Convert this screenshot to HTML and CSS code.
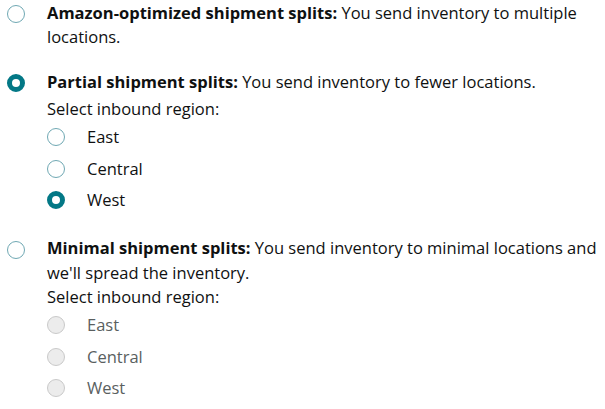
FILE: index.html
```html
<!DOCTYPE html>
<html lang="en">
<head>
<meta charset="utf-8">
<title>Shipment splits</title>
<link rel="stylesheet" href="styles.css">
</head>
<body>
<div class="options">
  <div class="option">
    <span class="radio"></span>
    <div class="content">
      <p class="desc"><b>Amazon-optimized shipment splits:</b> You send inventory to multiple locations.</p>
    </div>
  </div>
  <div class="option">
    <span class="radio checked"></span>
    <div class="content">
      <p class="desc"><b>Partial shipment splits:</b> You send inventory to fewer locations.</p>
      <p class="label label-spaced">Select inbound region:</p>
      <div class="sublist">
        <div class="sub"><span class="radio"></span><span class="sub-text">East</span></div>
        <div class="sub"><span class="radio"></span><span class="sub-text">Central</span></div>
        <div class="sub"><span class="radio checked"></span><span class="sub-text">West</span></div>
      </div>
    </div>
  </div>
  <div class="option">
    <span class="radio"></span>
    <div class="content">
      <p class="desc"><b>Minimal shipment splits:</b> You send inventory to minimal locations and we'll spread the inventory.</p>
      <p class="label">Select inbound region:</p>
      <div class="sublist">
        <div class="sub disabled"><span class="radio"></span><span class="sub-text">East</span></div>
        <div class="sub disabled"><span class="radio"></span><span class="sub-text">Central</span></div>
        <div class="sub disabled"><span class="radio"></span><span class="sub-text">West</span></div>
      </div>
    </div>
  </div>
</div>
</body>
</html>
```
FILE: styles.css
```css
html, body {
  margin: 0;
  padding: 0;
  background: #ffffff;
}
body {
  font-family: "Open Sans", "Noto Sans", "Liberation Sans", sans-serif;
  font-size: 16.5px;
  line-height: 24.5px;
  color: #0f1111;
}
.options {
  display: flex;
  flex-direction: column;
  gap: 20px;
  padding: 0.5px 0 0 7px;
  width: 598px;
}
.option {
  display: flex;
  align-items: flex-start;
  gap: 22px;
}
.option > .radio {
  margin-top: 4.5px;
}
.content {
  flex: 1;
}
p {
  margin: 0;
}
b {
  font-weight: 700;
}
.label-spaced {
  margin-top: 3px;
}
.sublist {
  display: flex;
  flex-direction: column;
}
.sub {
  display: flex;
  align-items: center;
  height: 31.5px;
}
.sub-text {
  margin-left: 22px;
}
.radio {
  box-sizing: border-box;
  flex: none;
  width: 18px;
  height: 18px;
  border-radius: 50%;
  border: 1.5px solid #6fa8b3;
  background: #fff;
}
.radio.checked {
  border: 5.5px solid #037886;
}
.sub.disabled .radio {
  background: #ececec;
  border: 1.5px solid #c9c9c9;
}
.sub.disabled .sub-text {
  color: #5a5f5f;
}
```
